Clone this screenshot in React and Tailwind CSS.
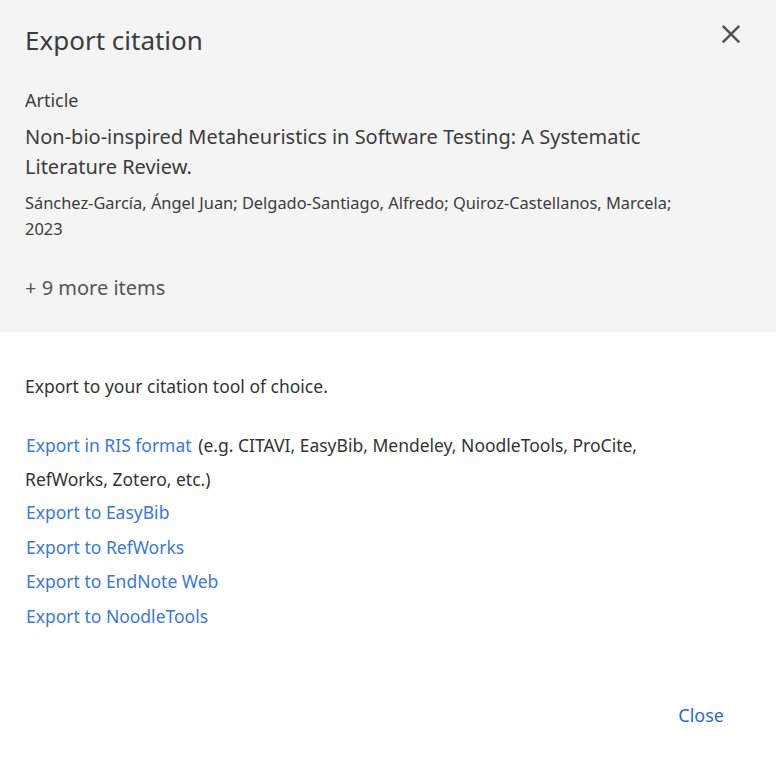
import React from 'react';

const links = ['Export to EasyBib', 'Export to RefWorks', 'Export to EndNote Web', 'Export to NoodleTools'];

const ExportCitationDialog = () => {
  return (
    <div className="w-[776px] h-[765px] bg-white text-[#333] flex flex-col" style={{ fontFamily: '"Noto Sans", "Open Sans", sans-serif' }}>
      <div className="bg-[#f4f4f4] h-[332px] px-[25px] pt-[20px] relative">
        <h2 className="text-[26px] leading-[40px] text-[#3c3c3c]">Export citation</h2>
        <button className="absolute right-[34px] top-[24px] w-[22px] h-[22px] text-[#555]" aria-label="Close">
          <svg viewBox="0 0 24 24" className="w-[22px] h-[22px]" fill="none" stroke="currentColor" strokeWidth="2.8">
            <path d="M3 2l18 18M21 2L3 20" />
          </svg>
        </button>
        <div className="mt-[28px] text-[18px] leading-[24px] text-[#3c3c3c]">Article</div>
        <div className="mt-[10px] text-[20px] leading-[30px] text-[#3c3c3c] max-w-[640px]">
          Non-bio-inspired Metaheuristics in Software Testing: A Systematic Literature Review.
        </div>
        <div className="mt-[8px] text-[16.4px] leading-[26px] text-[#3c3c3c] max-w-[670px]">
          Sánchez-García, Ángel Juan; Delgado-Santiago, Alfredo; Quiroz-Castellanos, Marcela; 2023
        </div>
        <div className="mt-[31px] text-[20px] leading-[30px] text-[#555]">+ 9 more items</div>
      </div>
      <div className="px-[25px] pt-[41px] flex-1 flex flex-col">
        <p className="text-[17.5px] leading-[26px] text-[#333]">Export to your citation tool of choice.</p>
        <div className="mt-[29px] text-[17.5px] leading-[34px] max-w-[640px]">
          <a href="#" className="text-[#3b78d8] ml-[1px] mr-[2px]">Export in RIS format</a>{' '}
          <span className="text-[#333]">(e.g. CITAVI, EasyBib, Mendeley, NoodleTools, ProCite, RefWorks, Zotero, etc.)</span>
        </div>
        <div className="-mt-[1px] flex flex-col items-start">
          {links.map(l => (
            <a key={l} href="#" className="text-[17.5px] leading-[34.5px] text-[#3b78d8] ml-[1px]">{l}</a>
          ))}
        </div>
        <div className="mt-auto mb-[36px] flex justify-end pr-[27px]">
          <button className="text-[18px] text-[#2f6bc4]">Close</button>
        </div>
      </div>
    </div>
  );
};

export default function App() {
  return <ExportCitationDialog />;
}
